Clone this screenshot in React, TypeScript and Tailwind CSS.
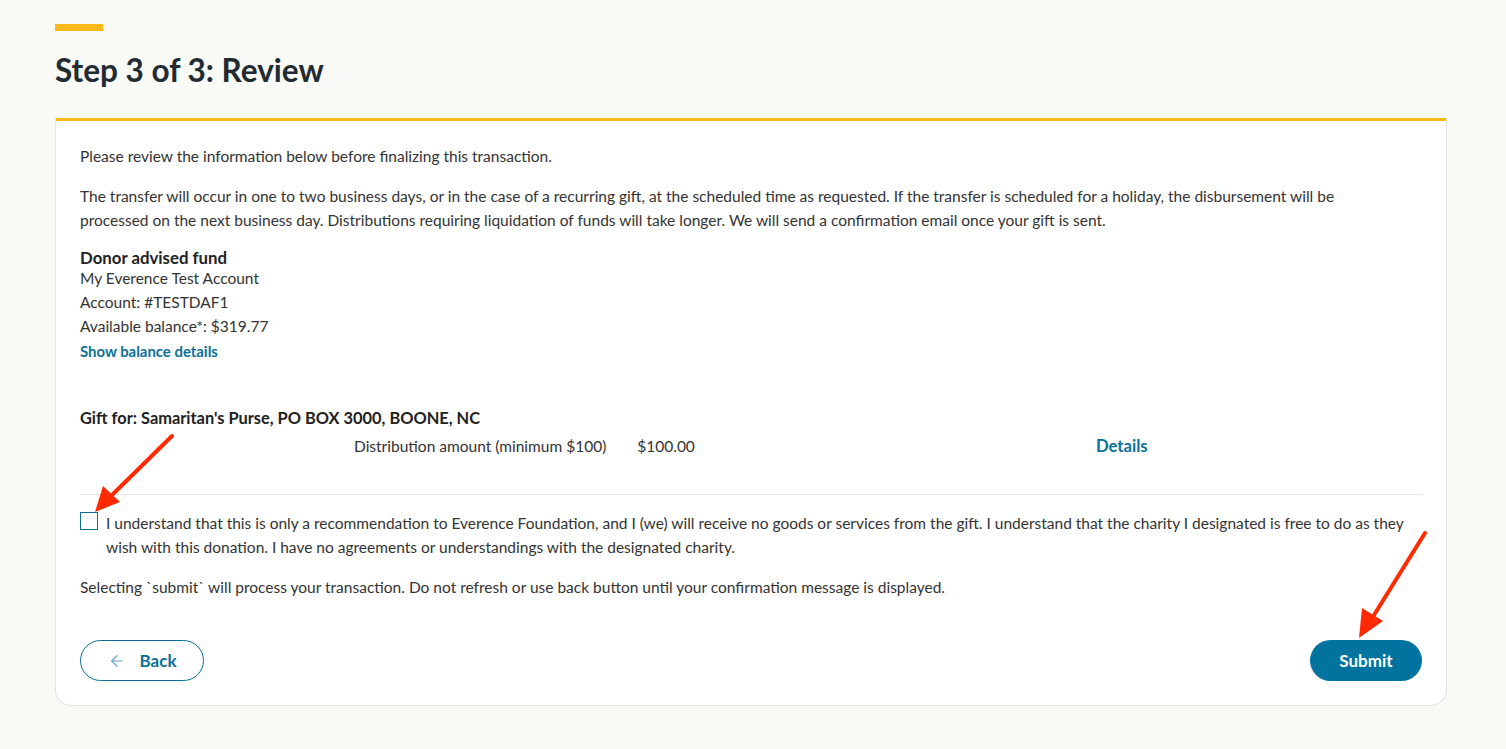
import { ArrowLeft } from "lucide-react";

const font = { fontFamily: "Lato, 'Noto Sans', sans-serif" };

export default function App() {
  return (
    <div className="relative min-h-[749px] bg-[#f9f9f6] text-[#333] px-[55px] pt-[24px]" style={font}>
      <div className="h-[7px] w-[48px] bg-[#fbb919]" />
      <h1 className="mt-[21px] text-[31.5px] font-bold leading-[36px] text-[#222b31]">Step 3 of 3: Review</h1>

      <div className="mt-[30px] w-[1392px] rounded-b-[16px] border border-t-0 border-[#e3e3e3] bg-white">
        <div className="h-[3px] bg-[#fbb919]" />
        <div className="px-[24px] pt-[23px] pb-[24px] text-[15.5px] leading-[24px]">
          <p>Please review the information below before finalizing this transaction.</p>
          <p className="mt-[16px]">
            The transfer will occur in one to two business days, or in the case of a recurring gift, at the scheduled
            time as requested. If the transfer is scheduled for a holiday, the disbursement will be
            <br />
            processed on the next business day. Distributions requiring liquidation of funds will take longer. We will
            send a confirmation email once your gift is sent.
          </p>

          <div className="mt-[14px]">
            <div className="text-[16.8px] font-bold text-[#222]">Donor advised fund</div>
            <div className="-mt-[4px]">My Everence Test Account</div>
            <div>Account: #TESTDAF1</div>
            <div>Available balance*: $319.77</div>
            <button className="mt-[1px] text-[14.9px] font-bold text-[#0b6f98]">Show balance details</button>
          </div>

          <div className="mt-[43px] text-[16.4px] font-bold text-[#222]">Gift for: Samaritan's Purse, PO BOX 3000, BOONE, NC</div>
          <div className="flex items-center pt-[4px]">
            <span className="ml-[274px]">Distribution amount (minimum $100)</span>
            <span className="ml-[31px]">$100.00</span>
            <button className="ml-[401px] text-[16.7px] font-bold text-[#0b6f98]">Details</button>
          </div>

          <div className="mt-[36px] border-t border-[#e6e6e6]" />

          <div className="mt-[16px] flex gap-[8px]">
            <input
              type="checkbox"
              className="mt-[1px] h-[18px] w-[18px] shrink-0 appearance-none border border-[#0b6f98] bg-white"
            />
            <p>
              I understand that this is only a recommendation to Everence Foundation, and I (we) will receive no goods or
              services from the gift. I understand that the charity I designated is free to do as they
              <br />
              wish with this donation. I have no agreements or understandings with the designated charity.
            </p>
          </div>

          <p className="mt-[16px]">
            Selecting `submit` will process your transaction. Do not refresh or use back button until your confirmation
            message is displayed.
          </p>

          <div className="mt-[41px] flex items-center justify-between">
            <button className="flex h-[41px] w-[124px] items-center justify-center gap-[14px] rounded-full border border-[#0b6f98] text-[17px] font-bold text-[#0b6f98]">
              <ArrowLeft className="h-[18px] w-[18px] text-[#5fa5c4]" strokeWidth={1.5} />
              Back
            </button>
            <button className="h-[41px] w-[112px] rounded-full bg-[#00739e] text-[17px] font-bold text-white">
              Submit
            </button>
          </div>
        </div>
      </div>

      {/* annotation arrows */}
      <svg className="pointer-events-none absolute left-0 top-0" width="1506" height="749">
        <line x1="172" y1="436" x2="112" y2="495" stroke="#ff2a00" strokeWidth="4" strokeLinecap="round" />
        <polygon points="95,512 103,486 120,502" fill="#ff2a00" />
        <line x1="1425" y1="533" x2="1374" y2="615" stroke="#ff2a00" strokeWidth="4" strokeLinecap="round" />
        <polygon points="1359,638 1362,608 1383,621" fill="#ff2a00" />
      </svg>
    </div>
  );
}
